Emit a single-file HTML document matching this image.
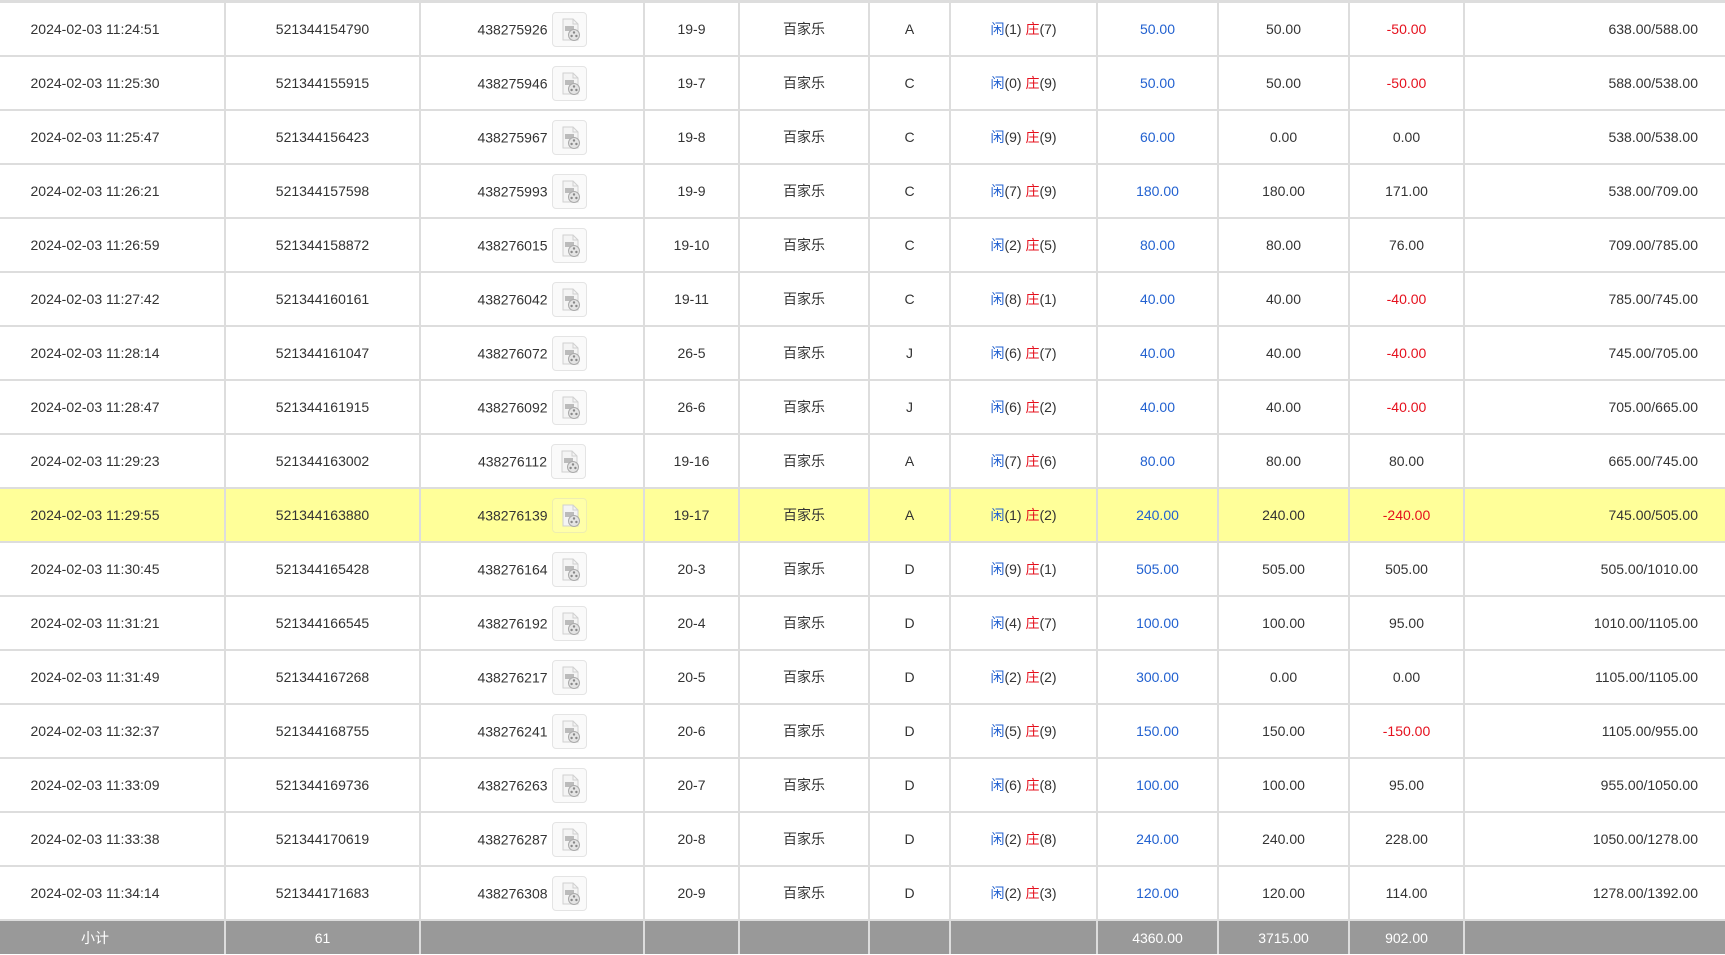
<!DOCTYPE html>
<html><head><meta charset="utf-8"><style>
html,body{margin:0;padding:0;background:#fff;width:1725px;height:955px;overflow:hidden}
table{border-collapse:collapse;table-layout:fixed;width:1725px;font-family:"Liberation Sans","Noto Sans CJK SC",sans-serif;font-size:14px;color:#333;border-top:3px solid #ddd}
td{border:2px solid #ddd;text-align:center;height:52px;padding:0;white-space:nowrap;vertical-align:middle}
td:first-child{border-left:none;padding-right:34px}td:last-child{border-right:none;text-align:right;padding-right:27px}
tr.hl td{background:#ffff99}
.b{color:#2261d0}.r{color:#e5101d}
.ic{display:inline-block;width:33px;height:33px;border:1px solid #e4e4e4;border-radius:4px;background:#fafafa;vertical-align:middle;margin-left:4px}
.ic svg{display:block}
.t{vertical-align:middle}
tr.hl .ic{background:#ffffa8;border-color:#eeeeb0}
tr.f td{background:#999;color:#fff;height:33px;border-bottom:none}
</style></head><body>
<svg width="0" height="0" style="position:absolute"><defs><g id="i"><path d="M10 6h10l5 5v16H10z" fill="#f4f4f4" stroke="#d0d0d0"/><path d="M20 6v5h5" fill="none" stroke="#d0d0d0"/><rect x="12" y="13" width="9" height="5" fill="#bbb"/><circle cx="21" cy="22" r="5.5" fill="#e4e4e4" stroke="#aaa"/><circle cx="21" cy="19.5" r="1.2" fill="#888"/><circle cx="18.6" cy="23" r="1.2" fill="#888"/><circle cx="23.4" cy="23" r="1.2" fill="#888"/></g></defs></svg>
<table>
<colgroup><col style="width:225px"><col style="width:195px"><col style="width:224px"><col style="width:95px"><col style="width:130px"><col style="width:81px"><col style="width:147px"><col style="width:121px"><col style="width:131px"><col style="width:115px"><col style="width:261px"></colgroup>
<tr><td>2024-02-03 11:24:51</td><td>521344154790</td><td><span class="t">438275926</span><span class="ic"><svg width="33" height="33"><use href="#i"/></svg></span></td><td>19-9</td><td>百家乐</td><td>A</td><td><span class="b">闲</span>(1) <span class="r">庄</span>(7)</td><td class="b">50.00</td><td>50.00</td><td class="r">-50.00</td><td>638.00/588.00</td></tr>
<tr><td>2024-02-03 11:25:30</td><td>521344155915</td><td><span class="t">438275946</span><span class="ic"><svg width="33" height="33"><use href="#i"/></svg></span></td><td>19-7</td><td>百家乐</td><td>C</td><td><span class="b">闲</span>(0) <span class="r">庄</span>(9)</td><td class="b">50.00</td><td>50.00</td><td class="r">-50.00</td><td>588.00/538.00</td></tr>
<tr><td>2024-02-03 11:25:47</td><td>521344156423</td><td><span class="t">438275967</span><span class="ic"><svg width="33" height="33"><use href="#i"/></svg></span></td><td>19-8</td><td>百家乐</td><td>C</td><td><span class="b">闲</span>(9) <span class="r">庄</span>(9)</td><td class="b">60.00</td><td>0.00</td><td>0.00</td><td>538.00/538.00</td></tr>
<tr><td>2024-02-03 11:26:21</td><td>521344157598</td><td><span class="t">438275993</span><span class="ic"><svg width="33" height="33"><use href="#i"/></svg></span></td><td>19-9</td><td>百家乐</td><td>C</td><td><span class="b">闲</span>(7) <span class="r">庄</span>(9)</td><td class="b">180.00</td><td>180.00</td><td>171.00</td><td>538.00/709.00</td></tr>
<tr><td>2024-02-03 11:26:59</td><td>521344158872</td><td><span class="t">438276015</span><span class="ic"><svg width="33" height="33"><use href="#i"/></svg></span></td><td>19-10</td><td>百家乐</td><td>C</td><td><span class="b">闲</span>(2) <span class="r">庄</span>(5)</td><td class="b">80.00</td><td>80.00</td><td>76.00</td><td>709.00/785.00</td></tr>
<tr><td>2024-02-03 11:27:42</td><td>521344160161</td><td><span class="t">438276042</span><span class="ic"><svg width="33" height="33"><use href="#i"/></svg></span></td><td>19-11</td><td>百家乐</td><td>C</td><td><span class="b">闲</span>(8) <span class="r">庄</span>(1)</td><td class="b">40.00</td><td>40.00</td><td class="r">-40.00</td><td>785.00/745.00</td></tr>
<tr><td>2024-02-03 11:28:14</td><td>521344161047</td><td><span class="t">438276072</span><span class="ic"><svg width="33" height="33"><use href="#i"/></svg></span></td><td>26-5</td><td>百家乐</td><td>J</td><td><span class="b">闲</span>(6) <span class="r">庄</span>(7)</td><td class="b">40.00</td><td>40.00</td><td class="r">-40.00</td><td>745.00/705.00</td></tr>
<tr><td>2024-02-03 11:28:47</td><td>521344161915</td><td><span class="t">438276092</span><span class="ic"><svg width="33" height="33"><use href="#i"/></svg></span></td><td>26-6</td><td>百家乐</td><td>J</td><td><span class="b">闲</span>(6) <span class="r">庄</span>(2)</td><td class="b">40.00</td><td>40.00</td><td class="r">-40.00</td><td>705.00/665.00</td></tr>
<tr><td>2024-02-03 11:29:23</td><td>521344163002</td><td><span class="t">438276112</span><span class="ic"><svg width="33" height="33"><use href="#i"/></svg></span></td><td>19-16</td><td>百家乐</td><td>A</td><td><span class="b">闲</span>(7) <span class="r">庄</span>(6)</td><td class="b">80.00</td><td>80.00</td><td>80.00</td><td>665.00/745.00</td></tr>
<tr class="hl"><td>2024-02-03 11:29:55</td><td>521344163880</td><td><span class="t">438276139</span><span class="ic"><svg width="33" height="33"><use href="#i"/></svg></span></td><td>19-17</td><td>百家乐</td><td>A</td><td><span class="b">闲</span>(1) <span class="r">庄</span>(2)</td><td class="b">240.00</td><td>240.00</td><td class="r">-240.00</td><td>745.00/505.00</td></tr>
<tr><td>2024-02-03 11:30:45</td><td>521344165428</td><td><span class="t">438276164</span><span class="ic"><svg width="33" height="33"><use href="#i"/></svg></span></td><td>20-3</td><td>百家乐</td><td>D</td><td><span class="b">闲</span>(9) <span class="r">庄</span>(1)</td><td class="b">505.00</td><td>505.00</td><td>505.00</td><td>505.00/1010.00</td></tr>
<tr><td>2024-02-03 11:31:21</td><td>521344166545</td><td><span class="t">438276192</span><span class="ic"><svg width="33" height="33"><use href="#i"/></svg></span></td><td>20-4</td><td>百家乐</td><td>D</td><td><span class="b">闲</span>(4) <span class="r">庄</span>(7)</td><td class="b">100.00</td><td>100.00</td><td>95.00</td><td>1010.00/1105.00</td></tr>
<tr><td>2024-02-03 11:31:49</td><td>521344167268</td><td><span class="t">438276217</span><span class="ic"><svg width="33" height="33"><use href="#i"/></svg></span></td><td>20-5</td><td>百家乐</td><td>D</td><td><span class="b">闲</span>(2) <span class="r">庄</span>(2)</td><td class="b">300.00</td><td>0.00</td><td>0.00</td><td>1105.00/1105.00</td></tr>
<tr><td>2024-02-03 11:32:37</td><td>521344168755</td><td><span class="t">438276241</span><span class="ic"><svg width="33" height="33"><use href="#i"/></svg></span></td><td>20-6</td><td>百家乐</td><td>D</td><td><span class="b">闲</span>(5) <span class="r">庄</span>(9)</td><td class="b">150.00</td><td>150.00</td><td class="r">-150.00</td><td>1105.00/955.00</td></tr>
<tr><td>2024-02-03 11:33:09</td><td>521344169736</td><td><span class="t">438276263</span><span class="ic"><svg width="33" height="33"><use href="#i"/></svg></span></td><td>20-7</td><td>百家乐</td><td>D</td><td><span class="b">闲</span>(6) <span class="r">庄</span>(8)</td><td class="b">100.00</td><td>100.00</td><td>95.00</td><td>955.00/1050.00</td></tr>
<tr><td>2024-02-03 11:33:38</td><td>521344170619</td><td><span class="t">438276287</span><span class="ic"><svg width="33" height="33"><use href="#i"/></svg></span></td><td>20-8</td><td>百家乐</td><td>D</td><td><span class="b">闲</span>(2) <span class="r">庄</span>(8)</td><td class="b">240.00</td><td>240.00</td><td>228.00</td><td>1050.00/1278.00</td></tr>
<tr><td>2024-02-03 11:34:14</td><td>521344171683</td><td><span class="t">438276308</span><span class="ic"><svg width="33" height="33"><use href="#i"/></svg></span></td><td>20-9</td><td>百家乐</td><td>D</td><td><span class="b">闲</span>(2) <span class="r">庄</span>(3)</td><td class="b">120.00</td><td>120.00</td><td>114.00</td><td>1278.00/1392.00</td></tr>
<tr class="f"><td>小计</td><td>61</td><td></td><td></td><td></td><td></td><td></td><td>4360.00</td><td>3715.00</td><td>902.00</td><td></td></tr>
</table>
</body></html>
